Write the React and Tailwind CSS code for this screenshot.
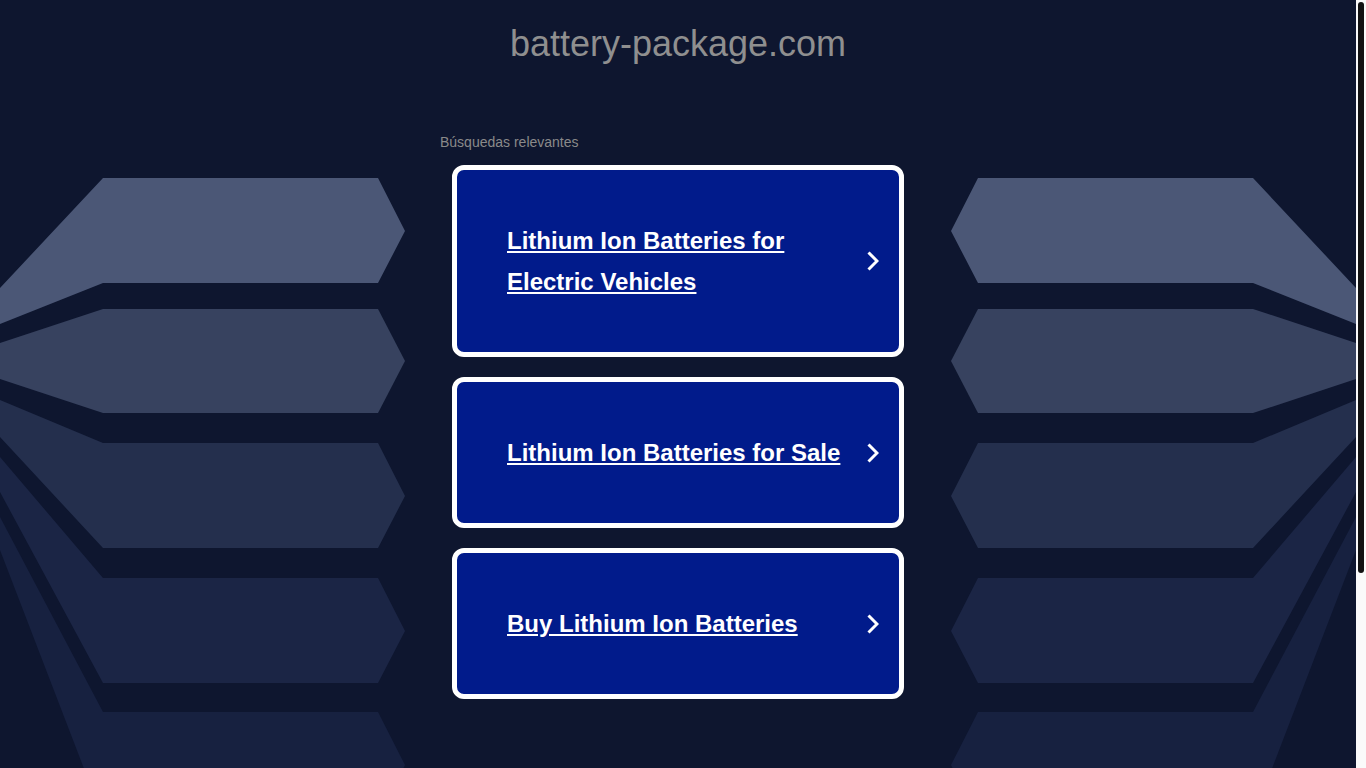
// Parked-domain search page: dark navy backdrop, angled side panels,
// three white-bordered blue link cards.

import React from "react";

// Left-hand panel shapes (mirrored for the right side)
const SHAPES = [
  { fill: "#4b5776", pts: [[0, 288], [103, 178], [378, 178], [405, 231], [378, 283], [103, 283], [0, 324]] },
  { fill: "#37425f", pts: [[0, 343], [103, 309], [378, 309], [405, 361], [378, 413], [103, 413], [0, 379]] },
  { fill: "#242f4d", pts: [[0, 400], [103, 443], [378, 443], [405, 496], [378, 548], [103, 548], [0, 437]] },
  { fill: "#1b2545", pts: [[0, 457], [103, 578], [378, 578], [405, 631], [378, 683], [103, 683], [0, 492]] },
  { fill: "#172140", pts: [[0, 517], [103, 712], [378, 712], [405, 765], [378, 818], [103, 818], [0, 550]] },
];

const toPoints = (pts, mirror) =>
  pts.map(([x, y]) => `${mirror ? 405 - x : x},${y}`).join(" ");

function SidePanels({ mirror }) {
  return (
    <svg
      width="405"
      height="830"
      viewBox="0 0 405 830"
      className={`absolute top-0 ${mirror ? "right-0" : "left-0"}`}
    >
      {SHAPES.map((s, i) => (
        <polygon key={i} points={toPoints(s.pts, mirror)} fill={s.fill} />
      ))}
    </svg>
  );
}

const Chevron = () => (
  <svg width="12" height="20" viewBox="0 0 12 20" className="shrink-0">
    <polyline
      points="1.5,1.5 10,10 1.5,18.5"
      fill="none"
      stroke="#fff"
      strokeWidth="3"
    />
  </svg>
);

const LINKS = [
  "Lithium Ion Batteries for Electric Vehicles",
  "Lithium Ion Batteries for Sale",
  "Buy Lithium Ion Batteries",
];

export default function App() {
  return (
    <div className="flex h-screen overflow-hidden bg-[#0e162f] font-['Liberation_Sans',Arial,sans-serif]">
      {/* page */}
      <main className="relative flex-1 overflow-hidden">
        {/* background panels */}
        <SidePanels />
        <SidePanels mirror />

        {/* content */}
        <div className="relative pt-[23px]">
          <h1 className="text-center text-[36px] leading-[41px] font-normal text-[#8f8f8f]">
            battery-package.com
          </h1>

          <div className="w-[476px] mx-auto mt-[70px]">
            <p className="text-[14px] leading-[16px] text-[#8a8a8a]">Búsquedas relevantes</p>

            <div className="mt-[15px] flex flex-col gap-[20px] px-[12px]">
              {LINKS.map((label) => (
                <a
                  key={label}
                  href="#"
                  className="flex items-center gap-[16px] bg-[#011b8b] border-[5px] border-white rounded-[12px]
                             pl-[50px] pr-[20px] py-[50px]"
                >
                  <span className="flex-1 text-white text-[24px] leading-[41px] font-bold underline">
                    {label}
                  </span>
                  <Chevron />
                </a>
              ))}
            </div>
          </div>
        </div>
      </main>

      {/* scrollbar */}
      <div className="w-[10px] shrink-0 bg-[#fafafa] px-[2px] pt-[2px]">
        <div className="h-[571px] rounded-full bg-[#121212]" />
      </div>
    </div>
  );
}
